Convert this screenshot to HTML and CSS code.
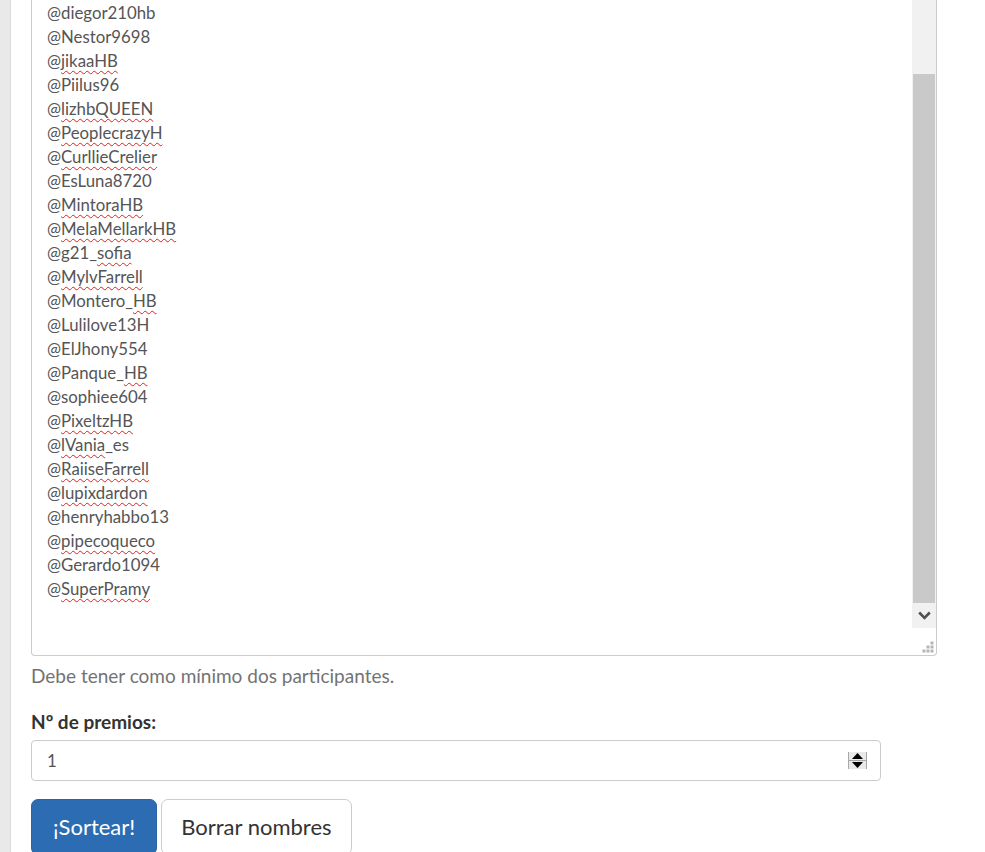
FILE: index.html
```html
<!DOCTYPE html>
<html lang="es">
<head>
<meta charset="utf-8">
<title>Sorteo</title>
<link rel="stylesheet" href="styles.css">
</head>
<body>
<div class="page">
  <div class="names-box">
    <div class="names">
      <div>@diegor210hb</div>
      <div>@Nestor9698</div>
      <div>@<span class="sp">jikaaHB</span></div>
      <div>@Piilus96</div>
      <div>@<span class="sp">lizhbQUEEN</span></div>
      <div>@<span class="sp">PeoplecrazyH</span></div>
      <div>@<span class="sp">CurllieCrelier</span></div>
      <div>@EsLuna8720</div>
      <div>@<span class="sp">MintoraHB</span></div>
      <div>@<span class="sp">MelaMellarkHB</span></div>
      <div>@g21_<span class="sp">sofia</span></div>
      <div>@<span class="sp">MylvFarrell</span></div>
      <div>@Montero_<span class="sp">HB</span></div>
      <div>@Lulilove13H</div>
      <div>@ElJhony554</div>
      <div>@Panque_<span class="sp">HB</span></div>
      <div>@sophiee604</div>
      <div>@<span class="sp">PixeltzHB</span></div>
      <div>@<span class="sp">lVania</span>_es</div>
      <div>@<span class="sp">RaiiseFarrell</span></div>
      <div>@<span class="sp">lupixdardon</span></div>
      <div>@henryhabbo13</div>
      <div>@<span class="sp">pipecoqueco</span></div>
      <div>@Gerardo1094</div>
      <div>@<span class="sp">SuperPramy</span></div>
    </div>
    <div class="scrollbar">
      <div class="track"></div>
      <div class="thumb"></div>
      <div class="arrow-btn">
        <svg width="13" height="9" viewBox="0 0 13 9"><path d="M1.2 1.5 L6.5 6.8 L11.8 1.5" fill="none" stroke="#505050" stroke-width="2.6"/></svg>
      </div>
      <div class="corner">
        <svg class="grip" width="12" height="12" viewBox="0 0 12 12">
          <rect x="8.5" y="0.5" width="3" height="3" fill="#b5b5b5"/>
          <rect x="4.5" y="4.5" width="3" height="3" fill="#b5b5b5"/>
          <rect x="8.5" y="4.5" width="3" height="3" fill="#b5b5b5"/>
          <rect x="0.5" y="8.5" width="3" height="3" fill="#b5b5b5"/>
          <rect x="4.5" y="8.5" width="3" height="3" fill="#b5b5b5"/>
          <rect x="8.5" y="8.5" width="3" height="3" fill="#b5b5b5"/>
        </svg>
      </div>
    </div>
  </div>
  <p class="help">Debe tener como mínimo dos participantes.</p>
  <label class="label">Nº de premios:</label>
  <div class="num-input">
    <span class="num-value">1</span>
    <span class="spinner">
      <span class="spin-half"><svg width="11" height="6" viewBox="0 0 11 6"><path d="M5.5 0 L11 6 L0 6 Z" fill="#000"/></svg></span>
      <span class="spin-half spin-down"><svg width="11" height="6" viewBox="0 0 11 6"><path d="M0 0 L11 0 L5.5 6 Z" fill="#000"/></svg></span>
    </span>
  </div>
  <div class="actions">
    <button class="btn btn-primary">¡Sortear!</button>
    <button class="btn btn-default">Borrar nombres</button>
  </div>
</div>
</body>
</html>
```

FILE: styles.css
```css
html, body {
  margin: 0;
  padding: 0;
  height: 100%;
  overflow: hidden;
}
body {
  background: #e9e9e9;
  font-family: Lato, "Open Sans", sans-serif;
}
.page {
  margin-left: 10px;
  min-height: 100%;
  background: #fff;
  border-left: 1px solid #dcdcdc;
  padding-left: 20px;
  box-sizing: border-box;
}
.names-box {
  width: 906px;
  height: 656px;
  box-sizing: border-box;
  border: 1px solid #cccccc;
  border-top: none;
  border-radius: 0 0 4px 4px;
  display: grid;
  grid-template-columns: 1fr 24px;
  background: #fff;
}
.names {
  padding: 1px 0 0 15px;
  font-size: 16.8px;
  line-height: 24px;
  color: #555555;
}
.sp {
  text-decoration: underline wavy #e0201c;
  text-decoration-thickness: 1px;
  text-underline-offset: 3px;
  text-decoration-skip-ink: none;
}
.scrollbar {
  display: flex;
  flex-direction: column;
}
.track {
  height: 74px;
  background: #f1f1f1;
}
.thumb {
  height: 529px;
  background: #c9c9c9;
  border-left: 1px solid #f1f1f1;
  border-right: 1px solid #f1f1f1;
}
.arrow-btn {
  height: 25px;
  background: #f1f1f1;
  display: flex;
  align-items: center;
  justify-content: center;
}
.corner {
  flex: 1;
  display: flex;
  align-items: flex-end;
  justify-content: flex-end;
  padding: 0 2px 2px 0;
}
.help {
  margin: 8px 0 0 0;
  font-size: 19px;
  line-height: 24px;
  color: #737373;
}
.label {
  display: block;
  margin-top: 22px;
  font-size: 19px;
  line-height: 24px;
  font-weight: 700;
  color: #333333;
}
.num-input {
  margin-top: 6px;
  width: 850px;
  height: 41px;
  box-sizing: border-box;
  border: 1px solid #cccccc;
  border-radius: 4px;
  display: flex;
  align-items: center;
  justify-content: space-between;
  padding: 0 13px 0 15px;
  font-size: 16.8px;
  color: #555555;
}
.spinner {
  width: 19px;
  height: 17px;
  box-sizing: border-box;
  background: #e9e9e9;
  border-left: 1px solid #a8a8a8;
  border-right: 1px solid #a8a8a8;
  display: flex;
  flex-direction: column;
}
.spin-half {
  flex: 1;
  display: flex;
  align-items: center;
  justify-content: center;
}
.spin-down {
  border-top: 1px solid #a8a8a8;
}
.spin-half svg {
  display: block;
}
.actions {
  margin-top: 18px;
  display: flex;
  gap: 4px;
}
.btn {
  font-family: Lato, "Open Sans", sans-serif;
  font-size: 22px;
  line-height: 28px;
  padding: 13px 20px;
  border-radius: 7px;
  border: 1px solid transparent;
  cursor: pointer;
}
.btn-primary {
  padding: 13px 21px;
  background: #2b6cb3;
  border-color: #2a64a3;
  color: #ffffff;
}
.btn-default {
  padding: 13px 19px;
  background: #ffffff;
  border-color: #cccccc;
  color: #333333;
}
```
